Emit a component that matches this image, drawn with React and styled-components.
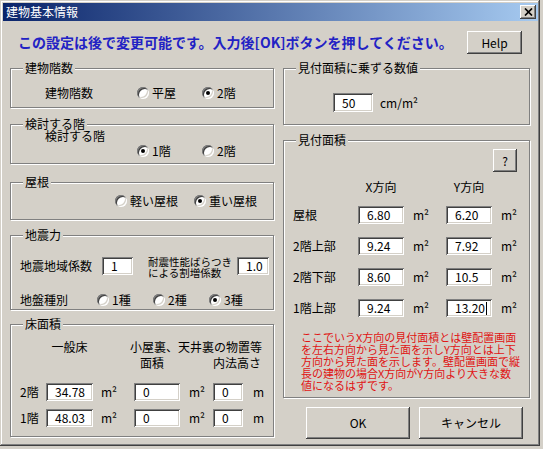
import React from 'react'
import styled, { createGlobalStyle } from 'styled-components'

const GlobalStyle = createGlobalStyle`
  html, body { margin: 0; padding: 0; background: #d4d0c8; }
  body {
    font-family: "Noto Sans CJK JP", "Noto Sans", sans-serif;
    font-size: 12px;
    color: #000;
  }
  * { box-sizing: border-box; }
`;

const raised = `
  box-shadow: inset -1px -1px #404040, inset 1px 1px #ffffff,
    inset -2px -2px #808080, inset 2px 2px #d4d0c8;
`;

const Window = styled.div`
  width: 540px;
  height: 446px;
  padding: 3px;
  background: #d4d0c8;
  box-shadow: inset -1px -1px #404040, inset 1px 1px #d4d0c8,
    inset -2px -2px #808080, inset 2px 2px #ffffff;
  display: flex;
  flex-direction: column;
`;

const TitleBar = styled.div`
  height: 18px;
  margin-right: -1px;
  background: linear-gradient(to right, #0a246a, #a6caf0);
  color: #fff;
  display: flex;
  align-items: center;
  justify-content: space-between;
  padding: 0 2px 0 3px;
  font-size: 12px;
  line-height: 18px;
`;

const CloseButton = styled.div`
  width: 16px;
  height: 14px;
  background: #d4d0c8;
  ${raised}
  display: flex;
  align-items: center;
  justify-content: center;
`;

const Header = styled.div`
  height: 41px;
  display: flex;
  align-items: flex-start;
  justify-content: space-between;
  padding: 10px 15px 0 15px;
`;

const HeaderText = styled.div`
  font-size: 14px;
  font-weight: bold;
  line-height: 23px;
  color: #2222c4;
  white-space: nowrap;
`;

const Button = styled.button`
  width: ${p => p.$w}px;
  height: ${p => p.$h}px;
  margin-right: ${p => p.$mr || 0}px;
  background: #d4d0c8;
  border: none;
  padding: 0;
  ${raised}
  font-family: inherit;
  font-size: 12px;
  line-height: 12px;
  color: #000;
`;

const Body = styled.div`
  display: flex;
  gap: 9px;
  padding-left: 7px;
`;

const Column = styled.div`
  display: flex;
  flex-direction: column;
  width: ${p => p.$w}px;
`;

const Group = styled.div`
  position: relative;
  margin-top: ${p => p.$mt}px;
  height: ${p => p.$h}px;
  width: ${p => p.$w || 264}px;
  border: 1px solid #808080;
  box-shadow: 1px 1px 0 #ffffff, inset 1px 1px 0 #ffffff;
  padding: ${p => p.$pad};
`;

const Legend = styled.span`
  position: absolute;
  top: -7px;
  left: 12px;
  padding: 0 2px;
  background: #d4d0c8;
  line-height: 12px;
  font-size: 12px;
  white-space: nowrap;
`;

const Row = styled.div`
  display: flex;
  align-items: ${p => p.$align || 'center'};
  margin-top: ${p => p.$mt || 0}px;
`;

const Label = styled.div`
  width: ${p => p.$w}px;
  flex: none;
  line-height: ${p => p.$lh || 14}px;
  white-space: nowrap;
`;

const Radios = styled.div`
  display: flex;
  margin-top: ${p => p.$mt || 0}px;
`;

const RadioOption = styled.div`
  width: ${p => p.$w}px;
  display: flex;
  align-items: center;
  gap: 3px;
  height: 14px;
  line-height: 14px;
  white-space: nowrap;
`;

const RadioCircle = styled.span`
  position: relative;
  width: 12px;
  height: 12px;
  flex: none;
  border-radius: 50%;
  background: #fff;
  box-shadow: inset 1px 1px 0 #808080, inset -1px -1px 0 #ffffff,
    inset 2px 2px 0 #404040, inset -2px -2px 0 #d4d0c8;
  &::after {
    content: '';
    display: ${p => (p.$on ? 'block' : 'none')};
    position: absolute;
    left: 4px;
    top: 4px;
    width: 4px;
    height: 4px;
    border-radius: 50%;
    background: #000;
  }
`;

const Field = styled.div`
  width: ${p => p.$w}px;
  height: ${p => p.$h || 18}px;
  flex: none;
  background: #fff;
  box-shadow: inset 1px 1px #808080, inset -1px -1px #ffffff,
    inset 2px 2px #404040, inset -2px -2px #d4d0c8;
  padding-left: 9px;
  font-size: 12px;
  line-height: ${p => p.$h || 18}px;
  white-space: nowrap;
`;

const Caret = styled.span`
  display: inline-block;
  width: 1px;
  height: 13px;
  margin-left: 1px;
  vertical-align: -2px;
  background: #000;
`;

const Unit = styled.div`
  padding-left: ${p => p.$pl || 0}px;
  line-height: 18px;
  white-space: nowrap;
`;

const Note = styled.div`
  width: 89px;
  margin-left: 15px;
  margin-top: 3px;
  font-size: 10.5px;
  line-height: 11px;
  white-space: nowrap;
`;

const AreaGrid = styled.div`
  display: grid;
  grid-template-columns: ${p => p.$cols};
  grid-auto-rows: ${p => p.$rowH}px;
  row-gap: ${p => p.$gap}px;
  margin-top: ${p => p.$mt || 0}px;
  padding-left: ${p => p.$pl || 0}px;
  align-items: center;
`;

const Cell = styled.div`
  grid-column: ${p => p.$col || 'auto'};
  text-align: ${p => p.$align || 'left'};
  padding-left: ${p => p.$pl || 0}px;
  margin-left: ${p => p.$ml || 0}px;
  line-height: 14px;
  white-space: nowrap;
`;

const HelpRow = styled.div`
  display: flex;
  justify-content: flex-end;
`;

const RedNote = styled.div`
  margin: 14px 0 0 17px;
  color: #e01414;
  font-size: 11px;
  line-height: 12px;
  white-space: nowrap;
`;

const ButtonRow = styled.div`
  display: flex;
  justify-content: flex-end;
  gap: 9px;
  margin-top: 9px;
  padding-right: 7px;
`;

const Radio = ({ w, on, children }) => (
  <RadioOption $w={w}>
    <RadioCircle $on={on} />
    {children}
  </RadioOption>
);

const floorCols = '26px 47px 41px 46px 33px 30px auto';
const viewCols = '65px 46px 42px 46px auto';

const viewRows = [
  ['屋根', '6.80', '6.20'],
  ['2階上部', '9.24', '7.92'],
  ['2階下部', '8.60', '10.5'],
  ['1階上部', '9.24', '13.20'],
];

const noteLines = [
  'ここでいうX方向の見付面積とは壁配置画面',
  'を左右方向から見た面を示しY方向とは上下',
  '方向から見た面を示します。壁配置画面で縦',
  '長の建物の場合X方向がY方向より大きな数',
  '値になるはずです。',
];

export default function App() {
  return (
    <>
      <GlobalStyle />
      <Window>
        <TitleBar>
          <span>建物基本情報</span>
          <CloseButton>
            <svg width="9" height="8" viewBox="0 0 9 8">
              <path d="M1 0.5 L8 7.5 M8 0.5 L1 7.5" stroke="#000" strokeWidth="1.7" fill="none" />
            </svg>
          </CloseButton>
        </TitleBar>

        <Header>
          <HeaderText>この設定は後で変更可能です。入力後[OK]ボタンを押してください。</HeaderText>
          <Button $w={55} $h={23}>Help</Button>
        </Header>

        <Body>
          <Column $w={264}>
            <Group $mt={6} $h={40} $pad="17px 0 0 34px">
              <Legend>建物階数</Legend>
              <Row>
                <Label $w={92}>建物階数</Label>
                <Radios>
                  <Radio w={65}>平屋</Radio>
                  <Radio w={65} on>2階</Radio>
                </Radios>
              </Row>
            </Group>

            <Group $mt={16} $h={40} $pad="5px 0 0 34px">
              <Legend>検討する階</Legend>
              <Row $align="flex-start">
                <Label $w={92} $lh={12}>検討する階</Label>
                <Radios $mt={14}>
                  <Radio w={65} on>1階</Radio>
                  <Radio w={65}>2階</Radio>
                </Radios>
              </Row>
            </Group>

            <Group $mt={18} $h={38} $pad="11px 0 0 104px">
              <Legend>屋根</Legend>
              <Radios>
                <Radio w={80}>軽い屋根</Radio>
                <Radio w={80} on>重い屋根</Radio>
              </Radios>
            </Group>

            <Group $mt={15} $h={75} $pad="17px 0 0 9px">
              <Legend>地震力</Legend>
              <Row>
                <Label $w={82}>地震地域係数</Label>
                <Field $w={31}>1</Field>
                <Note>
                  耐震性能ばらつき
                  <br />
                  による割増係数
                </Note>
                <Field $w={32}>1.0</Field>
              </Row>
              <Row $mt={15}>
                <Label $w={77}>地盤種別</Label>
                <Radios>
                  <Radio w={56}>1種</Radio>
                  <Radio w={56}>2種</Radio>
                  <Radio w={56} on>3種</Radio>
                </Radios>
              </Row>
            </Group>

            <Group $mt={14} $h={113} $pad="15px 0 0 9px">
              <Legend>床面積</Legend>
              <AreaGrid $cols={floorCols} $rowH={14} $gap={2}>
                <Cell $col="2" $align="center">一般床</Cell>
                <Cell $col="4 / -1" $ml={-4}>小屋裏、天井裏の物置等</Cell>
                <Cell $col="4" $pl={6}>面積</Cell>
                <Cell $col="6">内法高さ</Cell>
              </AreaGrid>
              <AreaGrid $cols={floorCols} $rowH={18} $gap={8} $mt={13}>
                <Cell>2階</Cell>
                <Field $w={47}>34.78</Field>
                <Unit $pl={8}>m²</Unit>
                <Field $w={46}>0</Field>
                <Unit $pl={9}>m²</Unit>
                <Field $w={30}>0</Field>
                <Unit $pl={10}>m</Unit>
                <Cell>1階</Cell>
                <Field $w={47}>48.03</Field>
                <Unit $pl={8}>m²</Unit>
                <Field $w={46}>0</Field>
                <Unit $pl={9}>m²</Unit>
                <Field $w={30}>0</Field>
                <Unit $pl={10}>m</Unit>
              </AreaGrid>
            </Group>
          </Column>

          <Column $w={247}>
            <Group $mt={6} $h={57} $w={247} $pad="24px 0 0 49px">
              <Legend>見付面積に乗ずる数値</Legend>
              <Row>
                <Field $w={40} $h={19}>50</Field>
                <Unit $pl={7}>cm/m²</Unit>
              </Row>
            </Group>

            <Group $mt={15} $h={258} $w={247} $pad="8px 0 0 0">
              <Legend>見付面積</Legend>
              <HelpRow>
                <Button $w={24} $h={23} $mr={12}>?</Button>
              </HelpRow>
              <AreaGrid $cols={viewCols} $rowH={14} $gap={0} $mt={8} $pl={9}>
                <Cell $col="2" $align="center">X方向</Cell>
                <Cell $col="4" $align="center">Y方向</Cell>
              </AreaGrid>
              <AreaGrid $cols={viewCols} $rowH={18} $gap={13} $mt={12} $pl={9}>
                {viewRows.map(([name, x, y], i) => (
                  <React.Fragment key={name}>
                    <Cell>{name}</Cell>
                    <Field $w={46}>{x}</Field>
                    <Unit $pl={9}>m²</Unit>
                    <Field $w={46}>
                      {y}
                      {i === viewRows.length - 1 && <Caret />}
                    </Field>
                    <Unit $pl={9}>m²</Unit>
                  </React.Fragment>
                ))}
              </AreaGrid>
              <RedNote>
                {noteLines.map(line => (
                  <div key={line}>{line}</div>
                ))}
              </RedNote>
            </Group>

            <ButtonRow>
              <Button $w={104} $h={32}>OK</Button>
              <Button $w={104} $h={32}>キャンセル</Button>
            </ButtonRow>
          </Column>
        </Body>
      </Window>
    </>
  );
}
